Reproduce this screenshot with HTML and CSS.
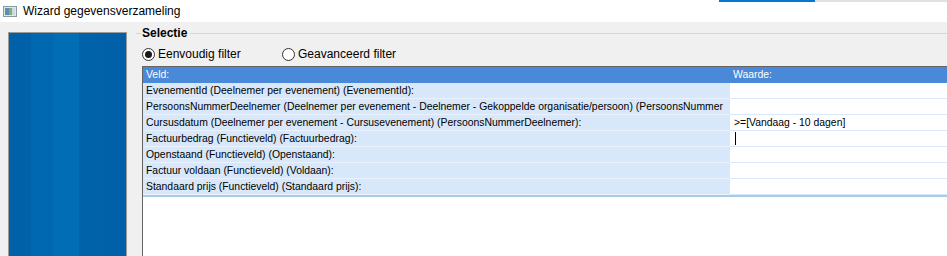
FILE: index.html
```html
<!DOCTYPE html>
<html>
  <head>
    <title>Wizard gegevensverzameling</title>
    <link rel="stylesheet" href="styles.css">
  </head>
  <body>
    <div class="titlebar">
      <svg class="appicon" width="14" height="11" viewBox="0 0 14 11">
        <rect x="0.5" y="0.5" width="13" height="10" fill="#dfe6ea" stroke="#8a9aa4"/>
        <rect x="2" y="2" width="4" height="7" fill="#5a8fb0"/>
        <rect x="6" y="2" width="3" height="7" fill="#7fb07a"/>
        <rect x="9" y="2" width="3" height="7" fill="#cfd8dc"/>
      </svg>
      <span class="title">Wizard gegevensverzameling</span>
      <div class="progress"><span class="done"></span></div>
    </div>
    <div class="main">
      <div class="sidepanel"></div>
      <div class="selection">
        <div class="groupbox">
          <span class="gline short"></span>
          <span class="gtitle">Selectie</span>
          <span class="gline"></span>
        </div>
        <div class="radios">
          <label class="radio"><span class="dot checked"></span>Eenvoudig filter</label>
          <label class="radio"><span class="dot"></span>Geavanceerd filter</label>
        </div>
        <div class="grid">
          <div class="head">Veld:</div>
          <div class="head">Waarde:</div>

          <div class="field">EvenementId (Deelnemer per evenement) (EvenementId):</div>
          <div class="value"></div>

          <div class="field">PersoonsNummerDeelnemer (Deelnemer per evenement - Deelnemer - Gekoppelde organisatie/persoon) (PersoonsNummer</div>
          <div class="value"></div>

          <div class="field">Cursusdatum (Deelnemer per evenement - Cursusevenement) (PersoonsNummerDeelnemer):</div>
          <div class="value">&gt;=[Vandaag - 10 dagen]</div>

          <div class="field">Factuurbedrag (Functieveld) (Factuurbedrag):</div>
          <div class="value"><span class="caret"></span></div>

          <div class="field">Openstaand (Functieveld) (Openstaand):</div>
          <div class="value"></div>

          <div class="field">Factuur voldaan (Functieveld) (Voldaan):</div>
          <div class="value"></div>

          <div class="field">Standaard prijs (Functieveld) (Standaard prijs):</div>
          <div class="value"></div>

          <div class="endline"></div>
          <div class="blank"></div>
        </div>
      </div>
    </div>
  </body>
</html>
```

FILE: styles.css
```css
* { margin: 0; padding: 0; box-sizing: border-box; }

html, body {
  height: 100%;
  overflow: hidden;
}

body {
  background: #f0f0f0;
  font-family: "Liberation Sans", Arial, sans-serif;
  font-size: 12px;
  color: #000;
  display: flex;
  flex-direction: column;
}

.titlebar {
  position: relative;
  height: 22px;
  background: #fff;
  display: flex;
  align-items: center;
  padding-left: 3px;
  flex: none;
}

.appicon { margin-right: 6px; }

.title {
  font-size: 12px;
  color: #000;
}

/* thin bar from the window behind, over the title bar */
.progress {
  position: absolute;
  top: 0;
  left: 719px;
  right: 0;
  height: 2px;
  background: #e1e1e1;
}

.progress .done {
  display: block;
  width: 96px;
  height: 2px;
  background: #0078d7;
}

.main {
  flex: 1;
  display: flex;
  min-height: 0;
}

.sidepanel {
  width: 119px;
  margin: 10px 0 0 8px;
  border: 1px solid #9a9a9a;
  border-bottom: none;
  background: linear-gradient(to right,
    #0060a8 0, #0060a8 22px,
    #0068b0 22px, #0068b0 44px,
    #006db4 44px, #006db4 70px,
    #0063aa 70px, #0060a8 100%);
}

.selection {
  flex: 1;
  margin: 5px 0 0 9px;
  display: flex;
  flex-direction: column;
  min-width: 0;
}

.groupbox {
  display: flex;
  align-items: center;
  height: 12px;
}

.gline {
  flex: 1;
  height: 1px;
  background: #d5d5d5;
}

.gline.short { flex: none; width: 5px; }

.gtitle {
  font-weight: bold;
  padding: 0 3px 0 1px;
}

.radios {
  display: flex;
  height: 24px;
  align-items: center;
  padding: 6px 0 0 6px;
}

.radio {
  display: flex;
  align-items: center;
  width: 140px;
}

.dot {
  width: 13px;
  height: 13px;
  border: 1px solid #333;
  border-radius: 50%;
  background: #fff;
  margin-right: 3px;
  display: flex;
  align-items: center;
  justify-content: center;
}

.dot.checked::after {
  content: "";
  width: 7px;
  height: 7px;
  border-radius: 50%;
  background: #1a1a1a;
}

.grid {
  flex: 1;
  margin: 3px 0 0 6px;
  border-top: 1px solid #646464;
  border-left: 1px solid #646464;
  background: #fff;
  display: grid;
  grid-template-columns: 587px 1fr;
  grid-auto-rows: 16px;
  grid-template-rows: repeat(8, 16px) 2px 1fr;
  font-size: 10.4px;
  line-height: 15px;
}

.grid > div {
  white-space: nowrap;
  overflow: hidden;
  padding-left: 3px;
}

.head {
  background: #4a88d8;
  color: #fff;
  line-height: 16px;
}

.field {
  background: #d8e8fa;
  border-bottom: 1px solid #eaf2fd;
}

.value {
  background: #fff;
  border-bottom: 1px solid #d8e8fa;
  padding-left: 4px !important;
}

.caret {
  display: inline-block;
  width: 1px;
  height: 13px;
  background: #000;
  vertical-align: -3px;
  margin-left: 1px;
}

.grid > .endline {
  grid-column: 1 / -1;
  background: #a6cce6;
}

.grid > .blank { grid-column: 1 / -1; }
```
